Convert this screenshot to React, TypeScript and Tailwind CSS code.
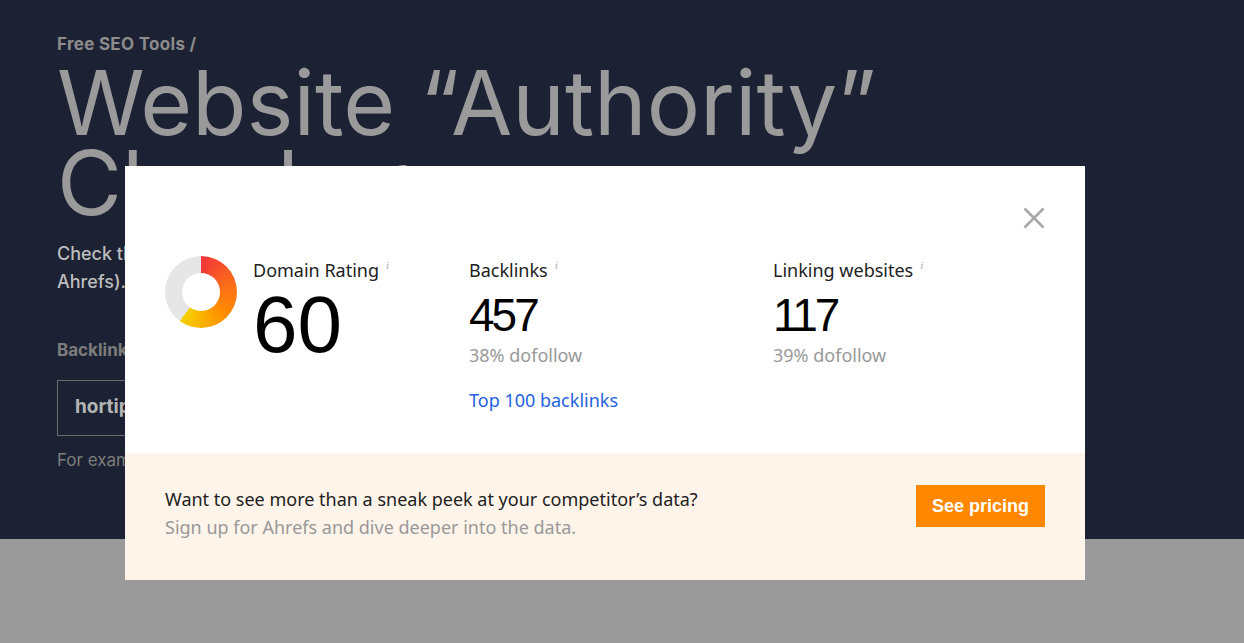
import React from "react";

function Info() {
  return (
    <span className="ml-[7px] relative -top-[8px] text-[11px] italic text-[#aaaaaa] font-['Liberation_Serif',serif]">i</span>
  );
}

function Donut() {
  return (
    <div className="relative w-[72px] h-[72px] rounded-full bg-[conic-gradient(#f2353a_0deg,#fb6a1c_70deg,#ff8a00_130deg,#f8c400_200deg,#f5d000_216deg,#e6e6e6_216deg,#e6e6e6_360deg)]">
      <div className="absolute left-[17px] top-[17px] w-[38px] h-[38px] rounded-full bg-white" />
    </div>
  );
}

export default function App() {
  return (
    <div className="relative w-[1244px] h-[643px] overflow-hidden font-['Noto_Sans',sans-serif]">
      <div className="h-[539px] bg-[#1c2233] pl-[57px] pt-[33px]">
        <div className="text-[17px] font-bold text-[#8c8c8c] font-['Inter',sans-serif] leading-[22px] tracking-[0.3px]">Free SEO Tools /</div>
        <h1 className="mt-[8px] text-[89px] leading-[80px] text-[#9a9a9a] font-['Inter',sans-serif] font-normal tracking-[0px]">
          Website “Authority”
          <br />
          Checker
        </h1>
        <p className="mt-[17px] text-[18px] leading-[28px] text-[#bdbdbd] font-['Inter',sans-serif] font-medium">
          Check the
          <br />
          Ahrefs).
        </p>
        <div className="mt-[42px] text-[17px] font-bold text-[#7c7c7c] font-['Inter',sans-serif]">Backlinks</div>
        <div className="mt-[16px] w-[500px] h-[56px] border border-[#6a6a6a] flex items-center pl-[17px] text-[19px] font-bold text-[#b5b5b5] font-['Inter',sans-serif]">
          hortiplus
        </div>
        <div className="mt-[12px] text-[17px] text-[#7c7c7c] font-['Inter',sans-serif]">For example</div>
      </div>
      <div className="h-[104px] bg-[#9a9a9a]" />

      <div className="absolute left-[125px] top-[166px] w-[960px] h-[414px] bg-white flex flex-col">
        <div className="relative h-[287px] pl-[40px] pt-[90px] flex">
          <button className="absolute right-[40px] top-[41px] w-[22px] h-[22px] text-[#a8a8a8]">
            <svg viewBox="0 0 22 22" width="22" height="22" fill="none" stroke="currentColor" strokeWidth="2.6">
              <path d="M1.5 1.5 L20.5 20.5 M20.5 1.5 L1.5 20.5" />
            </svg>
          </button>
          <div className="w-[304px] flex">
            <Donut />
            <div className="ml-[16px] mt-[2px]">
              <div className="text-[18px] leading-[24px] text-[#222]">
                Domain Rating<Info />
              </div>
              <div className="text-[80px] leading-[72px] mt-[4px] text-black font-['Liberation_Sans',sans-serif]">60</div>
            </div>
          </div>
          <div className="w-[304px] mt-[2px]">
            <div className="text-[18px] leading-[24px] text-[#222]">
              Backlinks<Info />
            </div>
            <div className="mt-[8px] text-[46px] leading-[44px] text-black font-['Liberation_Sans',sans-serif] tracking-[-3px]">457</div>
            <div className="mt-[4px] text-[18px] leading-[28px] text-[#999]">38% dofollow</div>
            <div className="mt-[19px] text-[18px] leading-[24px] text-[#1f63df]">Top 100 backlinks</div>
          </div>
          <div className="mt-[2px]">
            <div className="text-[18px] leading-[24px] text-[#222]">
              Linking websites<Info />
            </div>
            <div className="mt-[8px] text-[46px] leading-[44px] text-black font-['Liberation_Sans',sans-serif] tracking-[-3px]">117</div>
            <div className="mt-[4px] text-[18px] leading-[28px] text-[#999]">39% dofollow</div>
          </div>
        </div>
        <div className="flex-1 bg-[#fef4e9] px-[40px] flex items-start justify-between pt-[32px]">
          <div className="text-[18px] leading-[28px]">
            <div className="text-[#222]">Want to see more than a sneak peek at your competitor’s data?</div>
            <div className="text-[#999]">Sign up for Ahrefs and dive deeper into the data.</div>
          </div>
          <button className="w-[129px] h-[42px] bg-[#ff8800] text-white text-[18px] font-bold font-['Liberation_Sans',sans-serif]">
            See pricing
          </button>
        </div>
      </div>
    </div>
  );
}
